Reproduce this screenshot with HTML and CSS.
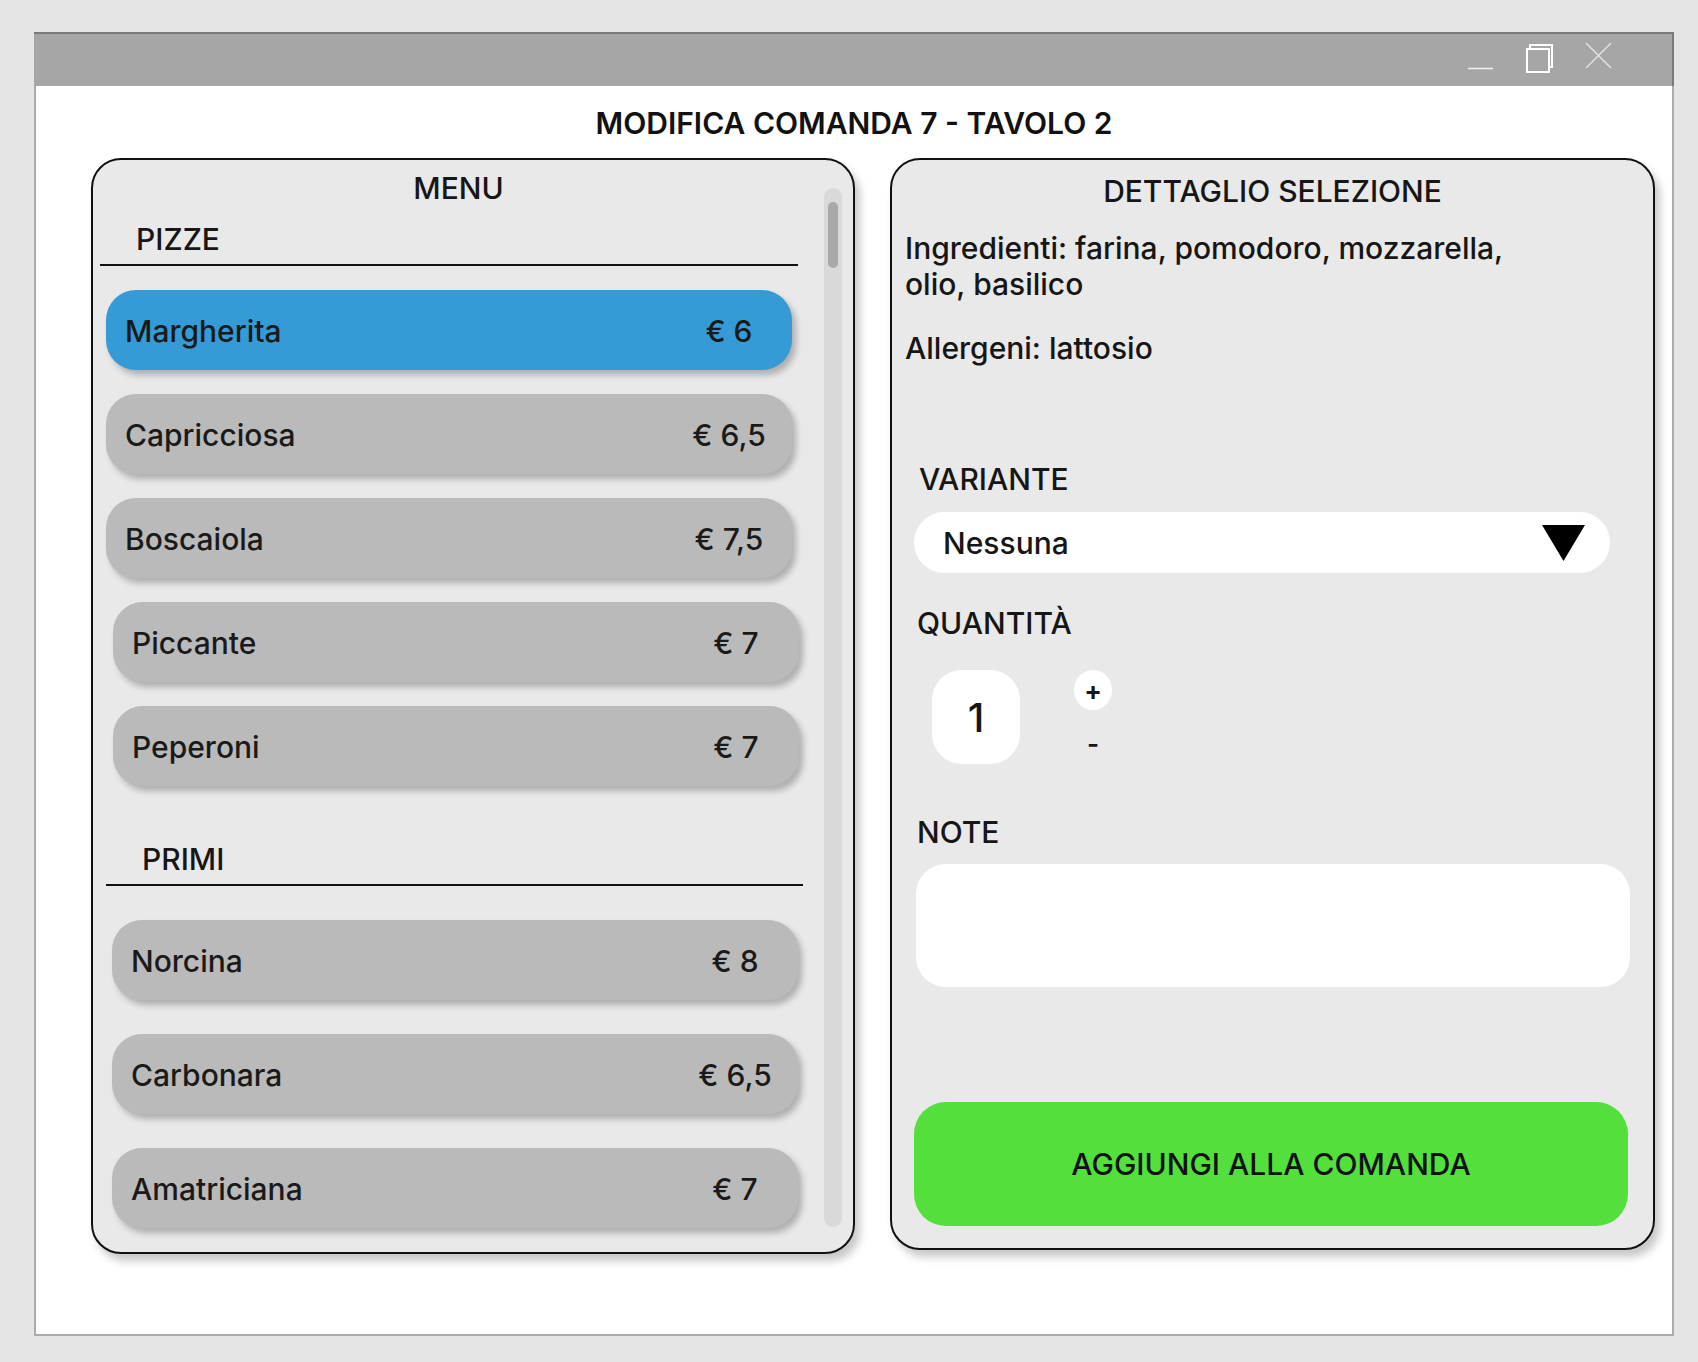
FILE: index.html
```html
<!DOCTYPE html>
<html lang="it">
<head>
<meta charset="utf-8">
<title>Modifica comanda</title>
<link rel="stylesheet" href="styles.css">
</head>
<body>
<div class="window">
  <div class="titlebar">
    <svg class="controls" width="160" height="52" viewBox="0 0 160 52">
      <line x1="8" y1="34.5" x2="33" y2="34.5" stroke="#f2f2f2" stroke-width="1.5"/>
      <path d="M70 15 V11 H92 V33 H89" fill="none" stroke="#ffffff" stroke-width="2"/>
      <rect x="67" y="15" width="22" height="23" fill="none" stroke="#ffffff" stroke-width="2"/>
      <line x1="126" y1="9" x2="151" y2="34" stroke="#e6e6e6" stroke-width="1.2"/>
      <line x1="151" y1="9" x2="126" y2="34" stroke="#e6e6e6" stroke-width="1.2"/>
    </svg>
  </div>
  <div class="content">
    <h1 class="page-title">MODIFICA COMANDA 7 - TAVOLO 2</h1>
    <div class="panels">
      <section class="panel menu-panel">
        <div class="menu-col">
          <h2 class="panel-title">MENU</h2>
          <div class="category cat-pizze">PIZZE</div>
          <div class="item selected first"><span class="name">Margherita</span><span class="price">€ 6</span></div>
          <div class="item"><span class="name">Capricciosa</span><span class="price">€ 6,5</span></div>
          <div class="item"><span class="name">Boscaiola</span><span class="price">€ 7,5</span></div>
          <div class="item shift"><span class="name">Piccante</span><span class="price">€ 7</span></div>
          <div class="item shift"><span class="name">Peperoni</span><span class="price">€ 7</span></div>
          <div class="category cat-primi">PRIMI</div>
          <div class="item primo first-primo"><span class="name">Norcina</span><span class="price">€ 8</span></div>
          <div class="item primo"><span class="name">Carbonara</span><span class="price">€ 6,5</span></div>
          <div class="item primo"><span class="name">Amatriciana</span><span class="price">€ 7</span></div>
        </div>
        <div class="scrollbar"><div class="thumb"></div></div>
      </section>
      <section class="panel detail-panel">
        <h2 class="detail-title">DETTAGLIO SELEZIONE</h2>
        <p class="info">Ingredienti: farina, pomodoro, mozzarella, olio, basilico</p>
        <p class="info allergeni">Allergeni: lattosio</p>
        <div class="label label-variante">VARIANTE</div>
        <div class="select">
          <span>Nessuna</span>
          <svg class="arrow" width="43" height="36" viewBox="0 0 43 36"><polygon points="0,0 43,0 21.5,36" fill="#000"/></svg>
        </div>
        <div class="label label-qty">QUANTITÀ</div>
        <div class="qty-row">
          <div class="qty-box">1</div>
          <div class="stepper">
            <div class="step-plus">+</div>
            <div class="step-minus">-</div>
          </div>
        </div>
        <div class="label label-note">NOTE</div>
        <div class="notes"></div>
        <div class="add-btn">AGGIUNGI ALLA COMANDA</div>
      </section>
    </div>
  </div>
</div>
</body>
</html>
```
FILE: styles.css
```css
* { box-sizing: border-box; }

body {
  margin: 0;
  background: #e5e5e5;
  font-family: "Inter", "Noto Sans", sans-serif;
  color: #161616;
}

.window {
  margin: 32px 0 0 34px;
  width: 1640px;
}

.titlebar {
  height: 54px;
  background: #a6a6a6;
  border-top: 2px solid #7a7a7a;
  border-right: 2px solid #7a7a7a;
  display: flex;
  justify-content: flex-end;
}

.controls {
  display: block;
  margin-right: 52px;
}

.content {
  height: 1250px;
  background: #ffffff;
  border: 2px solid #ababab;
  border-top: 0;
  padding-top: 19px;
}

.page-title {
  margin: 0;
  font-size: 30px;
  line-height: 36px;
  font-weight: 600;
  text-align: center;
  color: #111;
}

.panels {
  display: flex;
  align-items: flex-start;
  gap: 35px;
  margin-top: 17px;
  padding-left: 55px;
}

.panel {
  background: #e9e9e9;
  border: 2px solid #111;
  border-radius: 30px;
  box-shadow: 5px 7px 9px rgba(0, 0, 0, 0.22);
}

.menu-panel {
  width: 764px;
  height: 1096px;
  display: flex;
}

.menu-col {
  flex: 1;
  overflow: hidden;
  padding-top: 10px;
}

.panel-title {
  margin: 0;
  font-size: 30px;
  line-height: 36px;
  font-weight: 500;
  text-align: center;
}

.category {
  font-size: 30px;
  line-height: 36px;
  font-weight: 500;
  padding-left: 36px;
  padding-bottom: 7px;
  border-bottom: 2px solid #111;
}

.cat-pizze {
  margin: 15px 0 0 7px;
  width: 698px;
}

.cat-primi {
  margin: 55px 0 0 13px;
  width: 697px;
}

.item {
  width: 686px;
  height: 80px;
  margin: 24px 0 0 13px;
  border-radius: 30px;
  background: #bababa;
  box-shadow: 4px 5px 6px rgba(0, 0, 0, 0.25);
  display: flex;
  align-items: center;
  justify-content: space-between;
  padding: 2px 13px 0 19px;
  font-size: 30px;
  font-weight: 500;
  color: #1a1a1a;
}

.item.shift { margin-left: 20px; }

.item.primo {
  margin-left: 19px;
  margin-top: 34px;
}

.item.selected { background: #359bd6; }

.price {
  width: 100px;
  text-align: center;
}

.scrollbar {
  width: 18px;
  margin: 28px 11px 25px 0;
  background: #d9d9d9;
  border-radius: 9px;
  padding: 14px 4px 0;
}

.thumb {
  height: 66px;
  background: #a9a9a9;
  border-radius: 5px;
}

.detail-panel {
  width: 765px;
  height: 1092px;
}

.detail-title {
  margin: 13px 0 0;
  font-size: 30px;
  line-height: 36px;
  font-weight: 500;
  text-align: center;
}

.info {
  margin: 21px 0 0 13px;
  max-width: 630px;
  font-size: 30px;
  line-height: 36px;
  font-weight: 500;
}

.info.allergeni { margin-top: 28px; }

.label {
  font-size: 30px;
  line-height: 36px;
  font-weight: 500;
}

.label-variante { margin: 95px 0 0 27px; }
.label-qty { margin: 32px 0 0 25px; }
.label-note { margin: 50px 0 0 25px; }

.select {
  margin: 15px 0 0 22px;
  width: 696px;
  height: 61px;
  border-radius: 31px;
  background: #fff;
  display: flex;
  align-items: center;
  justify-content: space-between;
  padding: 0 25px 0 29px;
  font-size: 30px;
  font-weight: 500;
}

.arrow { display: block; }

.qty-row {
  margin: 29px 0 0 40px;
  display: flex;
  align-items: flex-start;
  gap: 54px;
}

.qty-box {
  width: 88px;
  height: 94px;
  border-radius: 30px;
  background: #fff;
  display: flex;
  align-items: center;
  justify-content: center;
  font-size: 40px;
  font-weight: 500;
}

.stepper {
  width: 38px;
  display: flex;
  flex-direction: column;
  align-items: center;
}

.step-plus {
  width: 38px;
  height: 40px;
  border-radius: 50%;
  background: #fff;
  display: flex;
  align-items: center;
  justify-content: center;
  font-size: 26px;
  font-weight: 700;
}

.step-minus {
  margin-top: 19px;
  font-size: 26px;
  line-height: 30px;
  font-weight: 600;
}

.notes {
  margin: 14px 0 0 24px;
  width: 714px;
  height: 123px;
  border-radius: 30px;
  background: #fff;
}

.add-btn {
  margin: 115px 0 0 22px;
  width: 714px;
  height: 124px;
  border-radius: 32px;
  background: #53e03d;
  display: flex;
  align-items: center;
  justify-content: center;
  font-size: 30px;
  font-weight: 500;
  color: #111;
}
```
